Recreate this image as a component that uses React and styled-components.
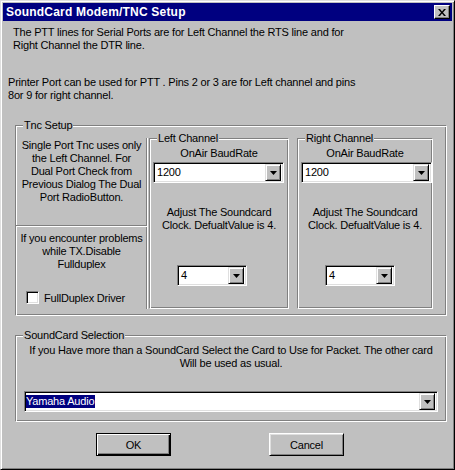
import styled, { createGlobalStyle } from 'styled-components';

const GlobalStyle = createGlobalStyle`
  body {
    margin: 0;
    background: #c0c0c0;
    font-family: "Liberation Sans", Arial, sans-serif;
    font-size: 11px;
    letter-spacing: -0.2px;
    color: #000;
  }
`;

const Window = styled.div`
  box-sizing: border-box;
  width: 455px;
  height: 470px;
  background: #c0c0c0;
  border: 1px solid;
  border-color: #dfdfdf #000 #000 #dfdfdf;
  box-shadow: inset 1px 1px 0 #fff, inset -1px -1px 0 #808080;
  padding: 2px;
`;

const TitleBar = styled.div`
  height: 18px;
  background: #000080;
  display: flex;
  align-items: center;
  justify-content: space-between;
  padding: 0 2px 0 3px;
`;

const Title = styled.span`
  color: #fff;
  font-weight: bold;
  font-size: 12px;
  letter-spacing: 0.2px;
`;

const CloseButton = styled.div`
  box-sizing: border-box;
  width: 16px;
  height: 14px;
  background: #c0c0c0;
  border: 1px solid;
  border-color: #fff #000 #000 #fff;
  box-shadow: inset -1px -1px 0 #808080;
  display: flex;
  align-items: center;
  justify-content: center;
`;

const Text = styled.div`
  line-height: 13px;
  margin: ${p => p.$m || '0'};
  text-align: ${p => (p.$center ? 'center' : 'left')};
`;

const Group = styled.div`
  position: relative;
  box-sizing: border-box;
  width: ${p => p.$w}px;
  height: ${p => p.$h}px;
  margin: ${p => p.$m || '0'};
  border: 1px solid #808080;
  border-right-color: #fff;
  border-bottom-color: #fff;
  box-shadow: inset 1px 1px 0 #fff, inset -1px -1px 0 #808080;
  padding: ${p => p.$pad || '0'};
`;

const Legend = styled.span`
  position: absolute;
  top: -7px;
  left: 7px;
  line-height: 13px;
  padding: 0 1px;
  background: #c0c0c0;
`;

const Columns = styled.div`
  display: flex;
  height: 100%;
`;

const InfoColumn = styled.div`
  box-sizing: border-box;
  width: 132px;
  border-right: 1px solid #fff;
  box-shadow: inset -1px 0 0 #808080;
  display: flex;
  flex-direction: column;
  margin-right: 1px;
`;

const InfoTop = styled.div`
  height: 89px;
  padding-top: 1px;
  box-sizing: border-box;
  border-bottom: 1px solid #fff;
  box-shadow: inset 0 -1px 0 #808080;
`;

const InfoBottom = styled.div`
  padding-top: 5px;
  flex: 1;
`;

const CheckRow = styled.label`
  display: flex;
  align-items: center;
  gap: 5px;
  margin: 20px 0 0 10px;
`;

const CheckBox = styled.span`
  box-sizing: border-box;
  width: 13px;
  height: 13px;
  background: #fff;
  border: 1px solid;
  border-color: #808080 #fff #fff #808080;
  box-shadow: inset 1px 1px 0 #000, inset -1px -1px 0 #dfdfdf;
`;

const Combo = styled.div`
  box-sizing: border-box;
  display: flex;
  align-items: center;
  width: ${p => p.$w}px;
  height: 21px;
  margin: ${p => p.$m || '0'};
  background: #fff;
  border: 1px solid;
  border-color: #808080 #fff #fff #808080;
  box-shadow: inset 1px 1px 0 #000, inset -1px -1px 0 #dfdfdf;
  padding: ${p => (p.$tight ? '2px 2px 2px 1px' : '2px 2px 2px 3px')};
`;

const ComboValue = styled.span`
  flex: 1;
  line-height: 13px;
  white-space: nowrap;
`;

const Selected = styled.span`
  background: #000080;
  color: #fff;
  padding: 0 1px 1px 0;
`;

const DropButton = styled.div`
  box-sizing: border-box;
  width: 16px;
  height: 17px;
  background: #c0c0c0;
  border: 1px solid;
  border-color: #dfdfdf #000 #000 #dfdfdf;
  box-shadow: inset 1px 1px 0 #fff, inset -1px -1px 0 #808080;
  display: flex;
  align-items: center;
  justify-content: center;
`;

const ButtonRow = styled.div`
  display: flex;
  margin: 11px 0 0 93px;
  gap: 98px;
`;

const Button = styled.div`
  box-sizing: border-box;
  width: 75px;
  height: 23px;
  display: flex;
  align-items: center;
  justify-content: center;
  background: #c0c0c0;
  border: 1px solid;
  border-color: ${p => (p.$default ? '#000' : '#fff #000 #000 #fff')};
  box-shadow: ${p =>
    p.$default
      ? 'inset 1px 1px 0 #fff, inset -1px -1px 0 #000, inset -2px -2px 0 #808080'
      : 'inset 1px 1px 0 #dfdfdf, inset -1px -1px 0 #808080'};
`;

const Arrow = () => (
  <svg width="7" height="4" viewBox="0 0 7 4">
    <path d="M0 0h7L3.5 4z" fill="#000" />
  </svg>
);

const ComboBox = ({ w, m, tight, children }) => (
  <Combo $w={w} $m={m} $tight={tight}>
    <ComboValue>{children}</ComboValue>
    <DropButton>
      <Arrow />
    </DropButton>
  </Combo>
);

const Channel = ({ title, w }) => (
  <Group $w={w} $h={171} $pad="8px 0 0 0">
    <Legend>{title}</Legend>
    <Text $center>OnAir BaudRate</Text>
    <ComboBox w={131} m="2px 0 0 3px">1200</ComboBox>
    <Text $center $m="23px 0 0 0">
      Adjust The Soundcard
      <br />
      Clock. DefualtValue is 4.
    </Text>
    <ComboBox w={70} m="33px 0 0 27px">4</ComboBox>
  </Group>
);

export default function App() {
  return (
    <>
      <GlobalStyle />
      <Window>
        <TitleBar>
          <Title>SoundCard Modem/TNC Setup</Title>
          <CloseButton>
            <svg width="8" height="7" viewBox="0 0 8 7">
              <path d="M0 0h2l2 2.5L6 0h2L5 3.5 8 7H6L4 4.5 2 7H0l3-3.5z" fill="#000" />
            </svg>
          </CloseButton>
        </TitleBar>

        <Text $m="5px 0 0 10px">
          The PTT lines for Serial Ports are for Left Channel the RTS line and for
          <br />
          Right Channel the DTR line.
        </Text>
        <Text $m="24px 0 0 5px">
          Printer Port can be used for PTT . Pins 2 or 3 are for Left channel and pins
          <br />
          8or 9 for right channel.
        </Text>

        <Group $w={432} $h={191} $m="23px 0 0 12px" $pad="12px 12px 6px 0">
          <Legend>Tnc Setup</Legend>
          <Columns>
            <InfoColumn>
              <InfoTop>
                <Text $center>
                  Single Port Tnc uses only
                  <br />
                  the Left Channel. For
                  <br />
                  Dual Port Check from
                  <br />
                  Previous Dialog The Dual
                  <br />
                  Port RadioButton.
                </Text>
              </InfoTop>
              <InfoBottom>
                <Text $center>
                  If you encounter problems
                  <br />
                  while TX.Disable
                  <br />
                  Fullduplex
                </Text>
                <CheckRow>
                  <CheckBox />
                  FullDuplex Driver
                </CheckRow>
              </InfoBottom>
            </InfoColumn>
            <Channel title="Left Channel" w={140} />
            <div style={{ width: 8 }} />
            <Channel title="Right Channel" w={136} />
          </Columns>
        </Group>

        <Group $w={432} $h={87} $m="19px 0 0 12px" $pad="8px 0 0 0">
          <Legend>SoundCard Selection</Legend>
          <Text $center>
            If you Have more than a SoundCard Select the Card to Use for Packet. The other card
            <br />
            Will be used as usual.
          </Text>
          <ComboBox w={414} m="21px 0 0 8px" tight>
            <Selected>Yamaha Audio</Selected>
          </ComboBox>
        </Group>

        <ButtonRow>
          <Button $default>OK</Button>
          <Button>Cancel</Button>
        </ButtonRow>
      </Window>
    </>
  );
}
